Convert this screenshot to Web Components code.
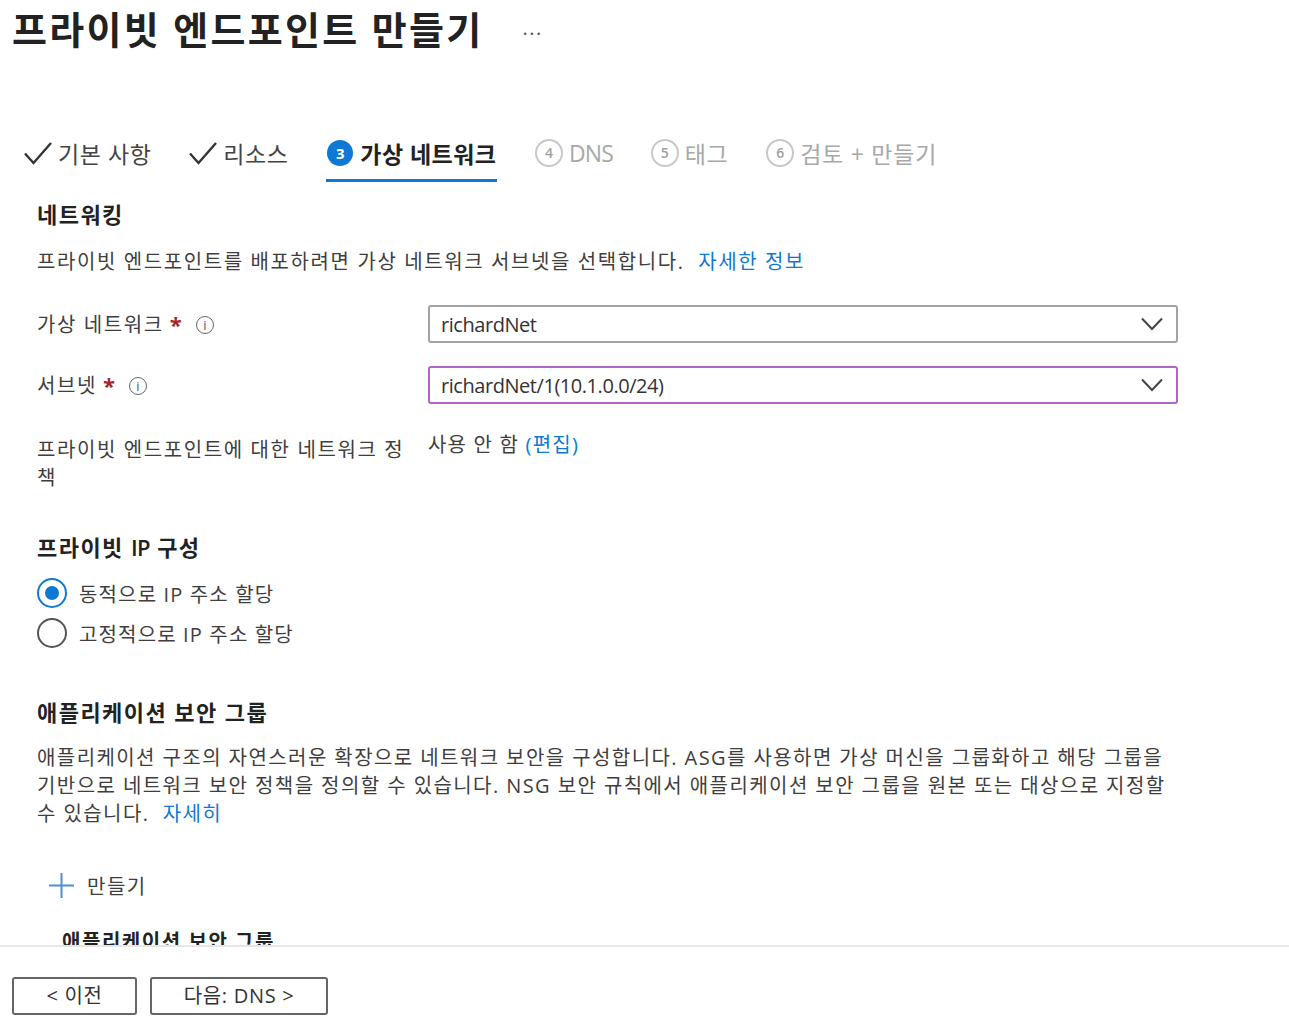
<!DOCTYPE html>
<html lang="ko"><head><meta charset="utf-8"><title>프라이빗 엔드포인트 만들기</title>
<style>
html,body{margin:0;padding:0;height:100%;background:#fff}
body{width:1289px;height:1035px;overflow:hidden;font-family:"Open Sans","Noto Sans CJK KR",sans-serif;color:#323130;font-size:20px;display:flex;flex-direction:column}
</style></head><body>
<template id="t-title"><style>
:host{display:flex;align-items:center;height:58px;padding-left:12px;flex:none}
h1{margin:0;font-size:38px;font-weight:700;letter-spacing:2.3px;line-height:58px;color:#222;white-space:nowrap}
span{margin-left:39px;font-size:20px;letter-spacing:1.5px;color:#555;position:relative;top:-2px}
</style><h1><slot></slot></h1><span>...</span></template>

<template id="t-tabs"><style>
:host{display:flex;gap:37.7px;padding:68px 0 0 24px;height:56px;flex:none}
</style><slot></slot></template>

<template id="t-tab"><style>
:host{display:flex;align-items:center;height:53px;gap:6px;font-size:23px;letter-spacing:.6px;white-space:nowrap;color:#444;border-bottom:3px solid transparent}
:host([state=active]){color:#222;font-weight:700;border-bottom-color:#0f78d4;letter-spacing:.45px;gap:7px;padding:0 1px}
:host([state=todo]){color:#a8a8a8;letter-spacing:.75px}
.n{width:24px;height:24px;border:2px solid #c8c8c8;border-radius:50%;display:flex;align-items:center;justify-content:center;font-size:14px;letter-spacing:0;font-weight:600;color:#a0a0a0;flex:none}
:host([state=active]) .n{width:26px;height:26px;border:0;background:#0f78d4;color:#fff;font-size:15px;font-weight:700}
svg{display:none;width:28px;height:26px;flex:none}
:host([state=done]) svg{display:block}
:host([state=done]) .n{display:none}
</style><svg viewBox="0 0 28 26"><path d="M1 13.5 9.5 23 27 3" fill="none" stroke="#333" stroke-width="2.4"/></svg><span class="n"></span><slot></slot></template>

<template id="t-form"><style>
:host{display:block;flex:1;min-height:0;overflow:hidden;padding:0 0 0 37px}
</style><slot></slot></template>

<template id="t-heading"><style>
:host{display:block;font-size:22px;font-weight:700;line-height:30px;color:#222;letter-spacing:1.45px}
</style><slot></slot></template>

<template id="t-text"><style>
:host{display:block;font-size:20px;line-height:28px;color:#3f3e3d;width:1140px;letter-spacing:1.6px}
::slotted(a){color:#0f78d4;text-decoration:none}
</style><slot></slot></template>

<template id="t-field"><style>
:host{display:grid;grid-template-columns:391px 750px;align-items:start;font-size:20px;letter-spacing:1.6px;color:#3f3e3d}
.l{line-height:28px;padding-right:20px;box-sizing:border-box}
.v{line-height:22px}
</style><div class="l"><slot name="label"></slot></div><div class="v"><slot></slot></div></template>

<template id="t-req"><style>
:host{display:inline-flex;align-items:center;height:38px}
.t{padding-top:2px}
b{color:#a4262c;font-weight:700;margin-left:6px;font-size:22px;line-height:1;letter-spacing:0}
i{display:flex;width:16px;height:16px;border:1.5px solid #666;border-radius:50%;align-items:center;justify-content:center;font:normal 13px "Open Sans",sans-serif;margin:2px 0 0 14px;letter-spacing:0;color:#555}
</style><span class="t"><slot></slot></span><b>*</b><i>i</i></template>

<template id="t-select"><style>
:host{display:flex;align-items:center;justify-content:space-between;height:38px;box-sizing:border-box;border:2px solid #a3a3a3;border-radius:3px;padding:0 12px 0 11px;font-size:20px;color:#333;letter-spacing:-.45px;line-height:28px}
:host([focus]){border-color:#b066c4}
span{padding-top:1px}
svg{width:24px;height:14px;flex:none}
</style><span><slot></slot></span><svg viewBox="0 0 24 14"><path d="M2 1.5 12 12 22 1.5" fill="none" stroke="#444" stroke-width="2"/></svg></template>

<template id="t-radio"><style>
:host{display:flex;align-items:center;gap:12px;height:40px;font-size:20px;letter-spacing:1.15px;color:#3f3e3d}
.o{width:26px;height:26px;border:2px solid #555;border-radius:50%;display:flex;align-items:center;justify-content:center;flex:none}
:host([checked]) .o{border-color:#0f78d4}
:host([checked]) .o::after{content:"";width:14px;height:14px;background:#0f78d4;border-radius:50%}
</style><span class="o"></span><slot></slot></template>

<template id="t-add"><style>
:host{display:flex;align-items:center;gap:13px;padding-left:12px;height:40px;font-size:20px;letter-spacing:1.5px;color:#3f3e3d}
svg{width:25px;height:25px;flex:none}
</style><svg viewBox="0 0 25 25"><path d="M12.5 0v25M0 12.5h25" stroke="#4a90d9" stroke-width="2" fill="none"/></svg><slot></slot></template>

<template id="t-footer"><style>
:host{display:flex;gap:13px;flex:none;height:90px;box-sizing:border-box;border-top:2px solid #e6e6e6;padding:30px 0 0 12px}
</style><slot></slot></template>

<template id="t-btn"><style>
:host{display:flex;align-items:center;justify-content:center;height:38px;box-sizing:border-box;border:2px solid #666;border-radius:3px;font-size:20px;letter-spacing:.7px;color:#333;white-space:nowrap;padding-bottom:3px}
</style><slot></slot></template>

<az-title>프라이빗 엔드포인트 만들기</az-title>
<az-tabs>
  <az-tab state="done">기본 사항</az-tab>
  <az-tab state="done">리소스</az-tab>
  <az-tab state="active" n="3">가상 네트워크</az-tab>
  <az-tab state="todo" n="4"><span style="letter-spacing:-.9px">DNS</span></az-tab>
  <az-tab state="todo" n="5">태그</az-tab>
  <az-tab state="todo" n="6">검토 + 만들기</az-tab>
</az-tabs>
<az-form>
  <az-heading style="margin-top:17px">네트워킹</az-heading>
  <az-text style="margin-top:19px">프라이빗 엔드포인트를 배포하려면 가상 네트워크 서브넷을 선택합니다.&nbsp; <a href="#">자세한 정보</a></az-text>
  <az-field style="margin-top:29px"><az-req slot="label">가상 네트워크</az-req><az-select>richardNet</az-select></az-field>
  <az-field style="margin-top:23px"><az-req slot="label">서브넷</az-req><az-select focus>richardNet/1(10.1.0.0/24)</az-select></az-field>
  <az-field style="margin-top:30px"><span slot="label" style="display:block;margin-top:2px">프라이빗 엔드포인트에 대한 네트워크 정책</span><span style="letter-spacing:1.2px">사용 안 함 <a href="#" style="color:#0f78d4;text-decoration:none">(편집)</a></span></az-field>
  <az-heading style="margin-top:40px">프라이빗 <span style="letter-spacing:-.6px;font-weight:600">IP</span> 구성</az-heading>
  <az-radio checked style="margin-top:11px">동적으로 IP 주소 할당</az-radio>
  <az-radio>고정적으로 IP 주소 할당</az-radio>
  <az-heading style="margin-top:44px">애플리케이션 보안 그룹</az-heading>
  <az-text style="margin-top:17px;letter-spacing:1.42px">애플리케이션 구조의 자연스러운 확장으로 네트워크 보안을 구성합니다. ASG를 사용하면 가상 머신을 그룹화하고 해당 그룹을 기반으로 네트워크 보안 정책을 정의할 수 있습니다. NSG 보안 규칙에서 애플리케이션 보안 그룹을 원본 또는 대상으로 지정할 수 있습니다.&nbsp; <a href="#">자세히</a></az-text>
  <az-add style="margin-top:37px">만들기</az-add>
  <az-heading style="margin:22px 0 0 25px;font-size:20px;letter-spacing:1.55px">애플리케이션 보안 그룹</az-heading>
</az-form>
<az-footer>
  <az-btn style="width:125px">&lt; 이전</az-btn>
  <az-btn style="width:178px">다음: DNS &gt;</az-btn>
</az-footer>
<script>
const map={'az-title':'t-title','az-tabs':'t-tabs','az-tab':'t-tab','az-form':'t-form','az-heading':'t-heading','az-text':'t-text','az-field':'t-field','az-req':'t-req','az-select':'t-select','az-radio':'t-radio','az-add':'t-add','az-footer':'t-footer','az-btn':'t-btn'};
for(const [name,id] of Object.entries(map)){
  customElements.define(name,class extends HTMLElement{
    constructor(){super();const r=this.attachShadow({mode:'open'});r.appendChild(document.getElementById(id).content.cloneNode(true));
      const n=r.querySelector('.n');if(n)n.textContent=this.getAttribute('n')||'';}
  });
}
</script>
</body></html>
